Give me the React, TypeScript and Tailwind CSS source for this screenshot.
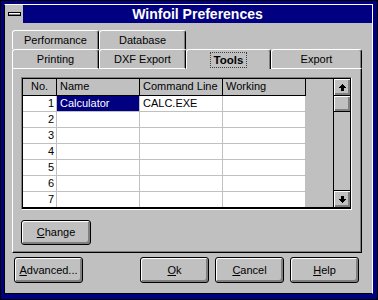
const raised =
  "shadow-[inset_1px_1px_0_#ffffff,inset_-1px_-1px_0_#808080,inset_-2px_-2px_0_#808080]";

const Tab = ({
  label,
  w,
  front,
  selected,
}: {
  label: string;
  w: string;
  front?: boolean;
  selected?: boolean;
}) => (
  <div
    className={`${w} ${front ? "h-[20px]" : "h-[19px]"} ${
      front && !selected ? "border-b border-b-white" : ""
    } flex items-center justify-center border-t border-l border-t-white border-l-white border-r border-r-black rounded-t-[3px] shadow-[inset_-1px_0_0_#808080]`}
  >
    {selected ? (
      <span className="font-bold text-[11.5px] leading-[14px] px-[3px] border border-dotted border-[#404040]">
        {label}
      </span>
    ) : (
      <span>{label}</span>
    )}
  </div>
);

const Btn = ({
  children,
  w,
  h,
}: {
  children: React.ReactNode;
  w: string;
  h: string;
}) => (
  <div
    className={`${w} ${h} flex items-center justify-center bg-[#c0c0c0] border border-black rounded-[3px] ${raised}`}
  >
    {children}
  </div>
);

const Arrow = ({ down }: { down?: boolean }) => (
  <svg
    width="7"
    height="7"
    viewBox="0 0 7 7"
    shapeRendering="crispEdges"
    className={down ? "rotate-180" : ""}
  >
    <path d="M3 0h1v1h1v1h1v1h1v1H5v3H2V4H0V3h1V2h1V1h1z" fill="black" />
  </svg>
);

const rows = [
  { n: 1, name: "Calculator", cmd: "CALC.EXE" },
  { n: 2, name: "", cmd: "" },
  { n: 3, name: "", cmd: "" },
  { n: 4, name: "", cmd: "" },
  { n: 5, name: "", cmd: "" },
  { n: 6, name: "", cmd: "" },
  { n: 7, name: "", cmd: "" },
];

export default function App() {
  return (
    <div
      className="w-[378px] h-[300px] bg-[#000080] border border-black pt-[3px] pl-[3px] pr-[4px] pb-[5px] flex flex-col text-black text-[11px] leading-[15px]"
      style={{ fontFamily: '"Liberation Sans", Arial, sans-serif' }}
    >
      <div className="flex-1 flex flex-col border-t border-r border-t-white border-r-white border-l border-b border-l-black border-b-black">
        {/* title bar */}
        <div className="h-[18px] flex">
          <div className="w-[18px] h-[18px] bg-[#c0c0c0] flex items-center justify-center">
            <div className="w-[13px] h-[4px] border border-black bg-white shadow-[inset_0_-1px_0_#808080]" />
          </div>
          <div className="flex-1 flex items-center justify-center text-white font-bold text-[14px]">
            Winfoil Preferences
          </div>
        </div>

        {/* client */}
        <div className="flex-1 bg-[#c0c0c0] flex flex-col">
          <div className="pt-[7px] pl-[7px] flex flex-col">
            <div className="flex">
              <Tab label="Performance" w="w-[87px]" />
              <Tab label="Database" w="w-[87px]" />
            </div>
            <div className="flex">
              <Tab label="Printing" w="w-[87px]" front />
              <Tab label="DXF Export" w="w-[87px]" front />
              <Tab label="Tools" w="w-[85px]" front selected />
              <Tab label="Export" w="w-[91px]" front />
            </div>

            {/* panel */}
            <div className="w-[350px] h-[184px] border-l border-l-white border-r border-r-black border-b border-b-black shadow-[inset_-1px_-1px_0_#808080] pt-[8px] pl-[8px] flex flex-col">
              <div className="w-[331px] border-t border-l border-t-[#808080] border-l-[#808080] border-r border-b border-r-white border-b-white">
                <div className="border-t border-l border-r border-black border-b-2 flex bg-[#c0c0c0]">
                  <div className="w-[283px] flex flex-col">
                    <div className="h-[17px] flex border-b border-black">
                      <div className="w-[34px] border-r border-black text-center">No.</div>
                      <div className="w-[83px] border-r border-black pl-[3px]">Name</div>
                      <div className="w-[83px] border-r border-black pl-[3px] whitespace-nowrap">Command Line</div>
                      <div className="w-[83px] border-r border-black pl-[3px]">Working</div>
                    </div>
                    {rows.map((r, i) => (
                      <div
                        key={r.n}
                        className={`flex bg-white ${
                          i < rows.length - 1 ? "h-[16px] border-b border-[#c0c0c0]" : "h-[15px]"
                        }`}
                      >
                        <div className="w-[34px] border-r border-[#c0c0c0] text-right pr-[2px]">{r.n}</div>
                        <div
                          className={`w-[83px] border-r border-[#c0c0c0] pl-[3px] ${
                            r.n === 1 ? "bg-[#000080] text-white" : ""
                          }`}
                        >
                          {r.name}
                        </div>
                        <div className="w-[83px] border-r border-[#c0c0c0] pl-[3px]">{r.cmd}</div>
                        <div className="w-[83px] border-r border-[#c0c0c0]" />
                      </div>
                    ))}
                  </div>
                  <div className="w-[27px]" />
                  <div className="w-[17px] border-l border-black flex flex-col">
                    <div className={`h-[17px] border-b border-black flex items-center justify-center ${raised}`}>
                      <Arrow />
                    </div>
                    <div className={`h-[16px] border-b border-black ${raised}`} />
                    <div className="flex-1" />
                    <div className={`h-[17px] border-t border-black flex items-center justify-center ${raised}`}>
                      <Arrow down />
                    </div>
                  </div>
                </div>
              </div>

              <div className="mt-[10px]">
                <Btn w="w-[70px]" h="h-[25px]">
                  <span>
                    <span className="underline">C</span>hange
                  </span>
                </Btn>
              </div>
            </div>
          </div>

          {/* bottom buttons */}
          <div className="flex mt-[4px] pl-[9px]">
            <Btn w="w-[69px]" h="h-[26px]">
              <span>
                <span className="underline">A</span>dvanced...
              </span>
            </Btn>
            <div className="ml-[57px] flex gap-[6px]">
              <Btn w="w-[69px]" h="h-[26px]">
                <span>
                  <span className="underline">O</span>k
                </span>
              </Btn>
              <Btn w="w-[69px]" h="h-[26px]">
                <span>
                  <span className="underline">C</span>ancel
                </span>
              </Btn>
              <Btn w="w-[69px]" h="h-[26px]">
                <span>
                  <span className="underline">H</span>elp
                </span>
              </Btn>
            </div>
          </div>
        </div>
      </div>
    </div>
  );
}
